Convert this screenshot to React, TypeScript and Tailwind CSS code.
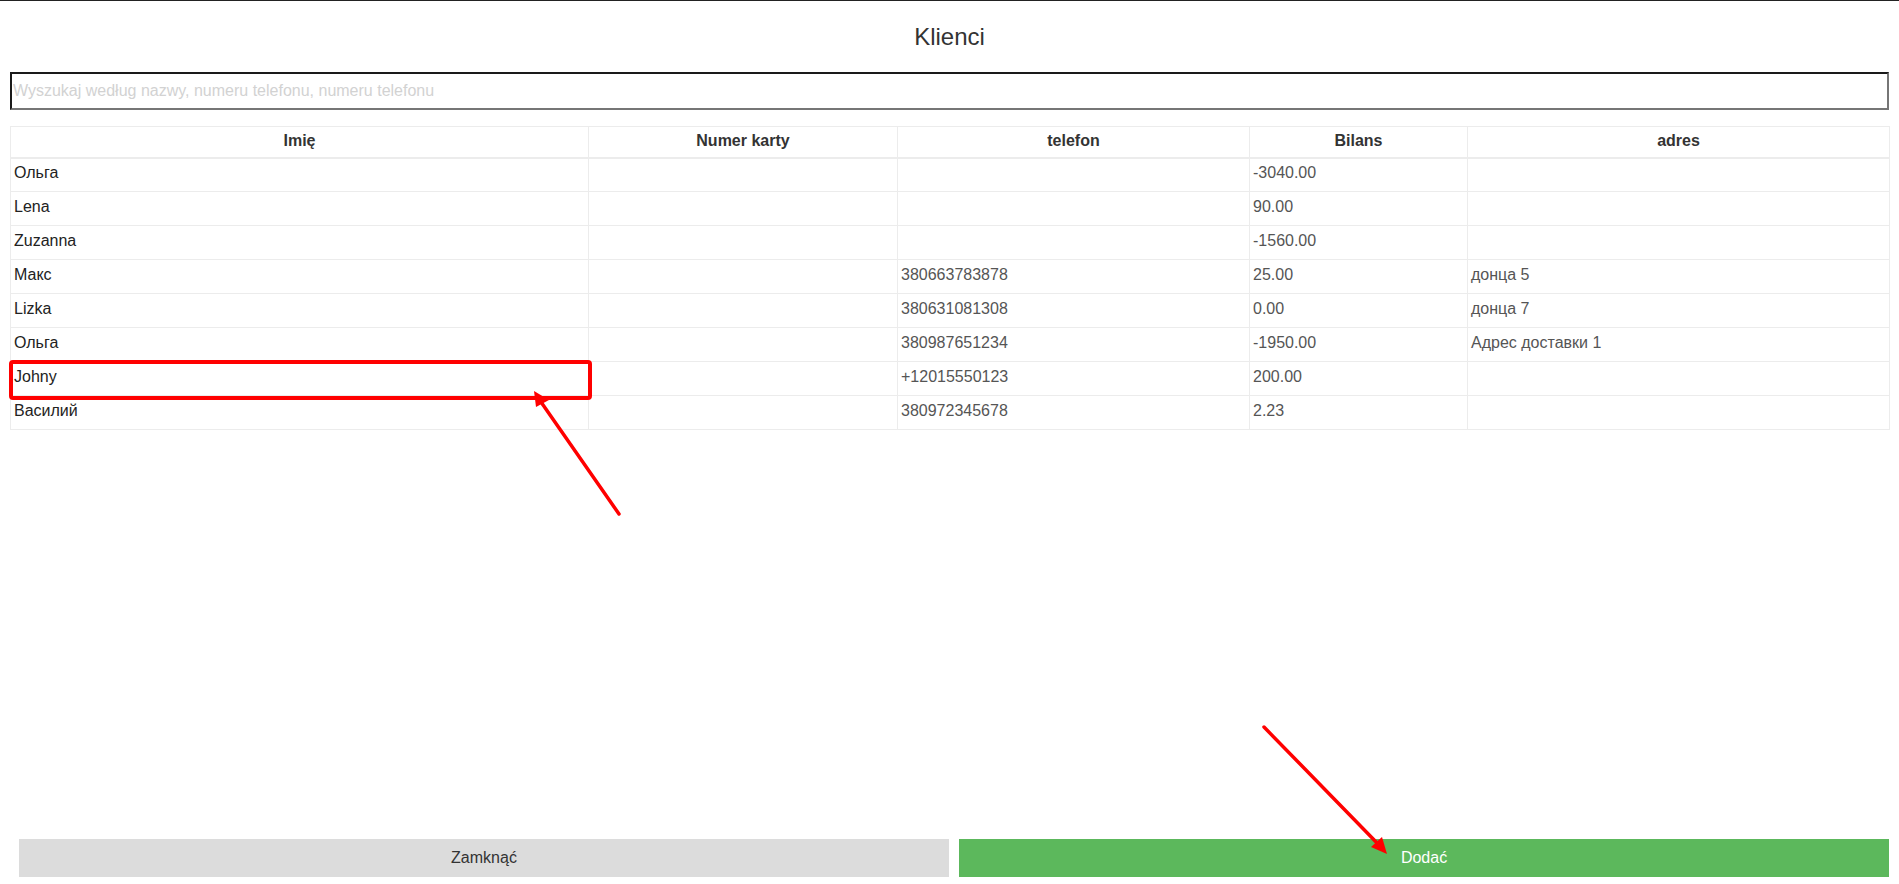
import React from "react";

const rows: [string, string, string, string, string][] = [
  ["Ольга", "", "", "-3040.00", ""],
  ["Lena", "", "", "90.00", ""],
  ["Zuzanna", "", "", "-1560.00", ""],
  ["Макс", "", "380663783878", "25.00", "донца 5"],
  ["Lizka", "", "380631081308", "0.00", "донца 7"],
  ["Ольга", "", "380987651234", "-1950.00", "Адрес доставки 1"],
  ["Johny", "", "+12015550123", "200.00", ""],
  ["Василий", "", "380972345678", "2.23", ""],
];

const headers = ["Imię", "Numer karty", "telefon", "Bilans", "adres"];
const widths = [578, 309, 352, 218, 422];

export default function App() {
  return (
    <div
      className="relative flex min-h-screen flex-col border-t border-[#222] bg-white text-[16px]"
      style={{ fontFamily: '"Liberation Sans", Arial, sans-serif' }}
    >
      <div className="flex h-[71px] items-center justify-center text-[24px] text-[#333]">
        Klienci
      </div>
      <div className="px-[10px]">
        <input
          type="text"
          placeholder="Wyszukaj według nazwy, numeru telefonu, numeru telefonu"
          className="block h-[38px] w-full border-2 border-t-[#1a1a1a] border-l-[#1a1a1a] border-b-[#767676] border-r-[#767676] px-[1px] text-[16px] text-[#333] outline-none placeholder:text-[#d2d2d2]"
        />
      </div>
      <div className="mt-[16px] px-[10px]">
        <table className="w-full table-fixed border-collapse border border-[#ececec]">
          <colgroup>
            {widths.map((w, i) => (
              <col key={i} style={{ width: w }} />
            ))}
          </colgroup>
          <thead>
            <tr className="h-[31px] border-b-2 border-[#ececec]">
              {headers.map((h) => (
                <th
                  key={h}
                  className="border-x border-[#ececec] px-1 pt-0 pb-[2px] text-center font-bold text-[#333]"
                >
                  {h}
                </th>
              ))}
            </tr>
          </thead>
          <tbody>
            {rows.map((r, ri) => (
              <tr key={ri} className="h-[34px] border-b border-[#ececec]">
                {r.map((c, ci) => (
                  <td
                    key={ci}
                    className={`border-x border-[#ececec] pl-[3px] pr-1 pt-0 pb-[3px] text-left ${
                      ci === 0 ? "text-[#222]" : "text-[#555]"
                    }`}
                  >
                    {c}
                  </td>
                ))}
              </tr>
            ))}
          </tbody>
        </table>
      </div>
      <div className="flex-1" />
      <div className="flex gap-[10px] pb-[7px] pl-[19px] pr-[10px]">
        <button className="flex h-[38px] flex-1 items-center justify-center bg-[#dcdcdc] text-[#333]">
          Zamknąć
        </button>
        <button className="flex h-[38px] flex-1 items-center justify-center bg-[#5cb85c] text-white">
          Dodać
        </button>
      </div>

      <svg
        className="pointer-events-none absolute left-0 top-0"
        width={1899}
        height={884}
        viewBox="0 0 1899 884"
      >
        <rect
          x={11}
          y={361}
          width={579}
          height={36}
          rx={2}
          fill="none"
          stroke="#ff0000"
          strokeWidth={4}
        />
        <line x1={619} y1={513} x2={541} y2={401} stroke="#ff0000" strokeWidth={3.5} strokeLinecap="round" />
        <polygon points="534,390 549,399 536,406" fill="#ff0000" />
        <line x1={1264} y1={726} x2={1380} y2={845} stroke="#ff0000" strokeWidth={3.5} strokeLinecap="round" />
        <polygon points="1387,853 1371,846 1382,836" fill="#ff0000" />
      </svg>
    </div>
  );
}
